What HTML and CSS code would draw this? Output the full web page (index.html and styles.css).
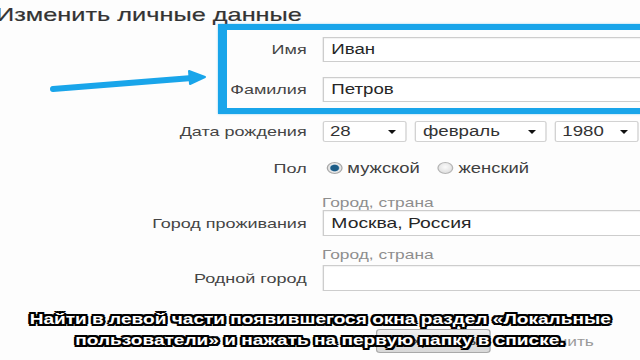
FILE: index.html
```html
<!DOCTYPE html>
<html lang="ru">
<head>
<meta charset="utf-8">
<title>Изменить личные данные</title>
<link rel="stylesheet" href="styles.css">
</head>
<body>
<div class="frame">
  <div class="page">
    <h1 class="title">Изменить личные данные</h1>
    <div class="form">
      <div class="row row-name">
        <label class="label">Имя</label>
        <div class="control"><div class="input">Иван</div></div>
      </div>
      <div class="row row-surname">
        <label class="label">Фамилия</label>
        <div class="control"><div class="input">Петров</div></div>
      </div>
      <div class="row row-date">
        <label class="label">Дата рождения</label>
        <div class="control selects">
          <div class="select s-day"><span>28</span><i class="caret"></i></div>
          <div class="select s-month"><span>февраль</span><i class="caret"></i></div>
          <div class="select s-year"><span>1980</span><i class="caret"></i></div>
        </div>
      </div>
      <div class="row row-sex">
        <label class="label">Пол</label>
        <div class="control radios">
          <span class="radio checked"></span><span class="radio-text">мужской</span>
          <span class="radio"></span><span class="radio-text">женский</span>
        </div>
      </div>
      <div class="hint hint-1">Город, страна</div>
      <div class="row row-city">
        <label class="label">Город проживания</label>
        <div class="control"><div class="input input-tall">Москва, Россия</div></div>
      </div>
      <div class="hint hint-2">Город, страна</div>
      <div class="row row-home">
        <label class="label">Родной город</label>
        <div class="control"><div class="input input-tall"></div></div>
      </div>
      <div class="actions">
        <span class="btn">Сохранить</span>
        <span class="cancel">Отменить</span>
      </div>
    </div>
  </div>

  <div class="highlight"></div>
  <svg class="arrow" width="640" height="360" viewBox="0 0 640 360">
    <line x1="53" y1="89" x2="192" y2="78" stroke="#19a5ea" stroke-width="6" stroke-linecap="round"/>
    <polygon points="205,77 189,71 190,84" fill="#19a5ea" stroke="#19a5ea" stroke-width="2" stroke-linejoin="round"/>
  </svg>

  <div class="subtitle">
    <div class="sub-line">Найти в левой части появившегося окна раздел «Локальные</div>
    <div class="sub-line">пользователи» и нажать на первую папку в списке.</div>
  </div>
</div>
</body>
</html>
```

FILE: styles.css
```css
html, body {
  margin: 0;
  padding: 0;
  background: #fdfdfd;
}
body {
  width: 640px;
  height: 360px;
  overflow: hidden;
  font-family: "Liberation Sans", Arial, sans-serif;
}
.frame {
  position: relative;
  width: 640px;
  height: 360px;
  overflow: hidden;
}
.page {
  width: 480px;
  height: 360px;
  transform: scaleX(1.3333);
  transform-origin: 0 0;
}
.title {
  margin: 0;
  padding-top: 4px;
  margin-left: -3px;
  font-size: 19px;
  line-height: 22px;
  font-weight: normal;
  color: #333;
  white-space: nowrap;
  -webkit-text-stroke: 0.2px #333;
}
.form {
  display: flex;
  flex-direction: column;
}
.row {
  display: grid;
  grid-template-columns: 230px 238px;
  column-gap: 11.5px;
  align-items: center;
}
.label {
  text-align: right;
  font-size: 13.5px;
  color: #454545;
  white-space: nowrap;
}
.input {
  height: 23px;
  box-sizing: border-box;
  border: 1px solid #cdcdcd;
  background: #fff;
  box-shadow: inset 0 1px 1px rgba(0,0,0,0.06);
  font-size: 14px;
  line-height: 21px;
  padding-left: 6px;
  color: #262626;
  width: 240px;
}
.input-tall { height: 26px; line-height: 24px; font-size: 14.5px; }
.row-name { margin-top: 11px; }
.row-name .input, .row-surname .input { height: 25px; line-height: 23px; }
.row-surname { margin-top: 15px; }
.row-date { margin-top: 19px; }
.selects { display: flex; gap: 6px; }
.select {
  position: relative;
  box-sizing: border-box;
  height: 21px;
  border: 1px solid #d2d2d2;
  border-radius: 2px;
  background: #fff;
  font-size: 14px;
  line-height: 19px;
  padding-left: 5px;
  color: #333;
}
.s-day { width: 64px; }
.s-month { width: 99px; }
.s-year { width: 64px; }
.caret {
  position: absolute;
  right: 7px;
  top: 8px;
  width: 0;
  height: 0;
  border-left: 3.5px solid transparent;
  border-right: 3.5px solid transparent;
  border-top: 4px solid #111;
}
.row-sex { margin-top: 16px; height: 20px; }
.radios { display: flex; align-items: center; }
.radio {
  width: 12px;
  height: 12px;
  box-sizing: border-box;
  border-radius: 50%;
  border: 1px solid #b5b5b5;
  background: radial-gradient(circle at 50% 40%, #fafafa, #d8d8d8);
  margin-left: 3px;
}
.radio.checked {
  background: radial-gradient(circle, #1d5c86 0 2.8px, #6f9fc0 3.3px, #e6e6e6 3.8px);
  border-color: #a8a8a8;
}
.radio-text {
  font-size: 13.8px;
  color: #404040;
  margin-left: 4px;
  margin-right: 10px;
}
.hint {
  margin-left: 241.5px;
  font-size: 13px;
  color: #8e8e8e;
  line-height: 14px;
}
.hint-1 { margin-top: 18px; }
.row-city { margin-top: 0; }
.hint-2 { margin-top: 12px; }
.row-home { margin-top: 3px; }
.actions {
  margin-top: 38px;
  display: flex;
  align-items: center;
  padding-left: 282px;
}
.btn {
  display: inline-block;
  box-sizing: border-box;
  width: 86px;
  height: 24px;
  border: 1px solid #a9a9a9;
  border-radius: 3px;
  background: linear-gradient(#f0f0f0, #d8d8d8);
  text-align: center;
  font-size: 13px;
  line-height: 22px;
  color: #444;
}
.cancel {
  margin-left: 18px;
  font-size: 13px;
  color: #9a9a9a;
}
.highlight {
  position: absolute;
  left: 218px;
  top: 24px;
  width: 440px;
  height: 78px;
  border: 6px solid #19a5ea;
  border-left-width: 9px;
  box-shadow: 0 0 2px rgba(25,165,234,0.5);
}
.arrow {
  position: absolute;
  left: 0;
  top: 0;
}
.subtitle {
  position: absolute;
  left: 0;
  right: 0;
  top: 308px;
  display: flex;
  flex-direction: column;
  align-items: center;
  font-family: "Liberation Sans", Arial, sans-serif;
  font-weight: bold;
  font-size: 15.5px;
  line-height: 21px;
  color: #fff;
  text-shadow:
    -1.6px -1.6px 0 #000, 1.6px -1.6px 0 #000, -1.6px 1.6px 0 #000, 1.6px 1.6px 0 #000,
    0 -2.1px 0 #000, 0 2.1px 0 #000, -2.1px 0 0 #000, 2.1px 0 0 #000;
}
.sub-line {
  white-space: nowrap;
  transform: scaleX(1.23);
}
```
